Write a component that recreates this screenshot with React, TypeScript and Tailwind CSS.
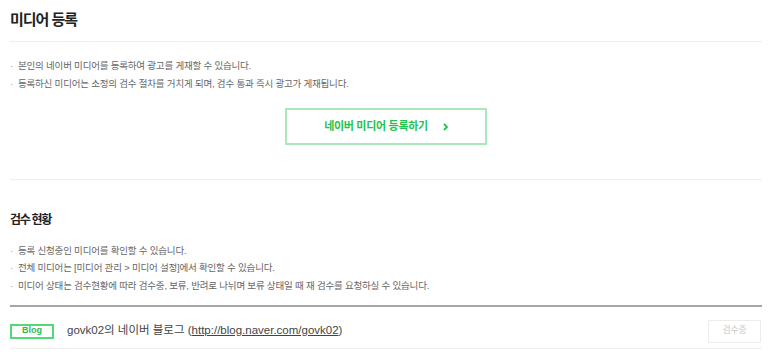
import React from 'react'

const intro = [
  '본인의 네이버 미디어를 등록하여 광고를 게재할 수 있습니다.',
  '등록하신 미디어는 소정의 검수 절차를 거치게 되며, 검수 통과 즉시 광고가 게재됩니다.'
]

const status = [
  '등록 신청중인 미디어를 확인할 수 있습니다.',
  '전체 미디어는 [미디어 관리 > 미디어 설정]에서 확인할 수 있습니다.',
  '미디어 상태는 검수현황에 따라 검수중, 보류, 반려로 나뉘며 보류 상태일 때 재 검수를 요청하실 수 있습니다.'
]

function Bullets({ items }: { items: string[] }): React.JSX.Element {
  return (
    <ul className="text-[9.5px] tracking-[-0.2px] text-[#666]">
      {items.map((t) => (
        <li key={t} className="flex h-[17.5px] items-center">
          <span className="w-[8px] shrink-0 text-[#999]">·</span>
          <span>{t}</span>
        </li>
      ))}
    </ul>
  )
}

export default function App(): React.JSX.Element {
  return (
    <div className="w-[773px] h-[357px] overflow-hidden bg-white pl-[10px] pr-[11px] font-['Liberation_Sans','Noto_Sans_CJK_KR',sans-serif]">
      {/* 상단 제목 */}
      <div className="h-[42px] flex items-center border-b border-[#eeeeee]">
        <h1 className="text-[15px] font-bold tracking-[-1px] text-[#222]">미디어 등록</h1>
      </div>

      <div className="pt-[15px]">
        <div className="[&_li]:h-[18px]">
          <Bullets items={intro} />
        </div>
        <div className="mt-[15px] flex justify-center">
          <button className="w-[202px] h-[37px] border-2 border-[#a9e9b9] flex items-center justify-center gap-[15px] text-[11px] font-bold tracking-[-0.3px] text-[#22c24e]">
            <span>네이버 미디어 등록하기</span>
            <svg width="5" height="8" viewBox="0 0 5 8" className="mt-px">
              <path d="M1 1l3 3-3 3" fill="none" stroke="#22c24e" strokeWidth="1.8" />
            </svg>
          </button>
        </div>
      </div>

      <div className="mt-[34px] border-t border-[#eeeeee] pt-[32px]">
        <h2 className="h-[16px] flex items-center text-[12px] font-bold tracking-[-1.3px] text-[#222]">검수 현황</h2>
        <div className="mt-[14px]">
          <Bullets items={status} />
        </div>
      </div>

      {/* 검수 목록 */}
      <div className="mt-[10px] border-t-2 border-[#a6a6a6]">
        <div className="h-[42px] pt-[8px] flex items-center border-b border-[#eeeeee]">
          <span className="w-[44px] h-[15px] border-2 border-[#52d878] flex items-center justify-center text-[9px] font-bold text-[#2dbb52]">
            Blog
          </span>
          <span className="ml-[13px] text-[11.5px] text-[#444] -mt-px">
            govk02의 네이버 블로그 (<span className="underline">http://blog.naver.com/govk02</span>)
          </span>
          <span className="ml-auto mr-px w-[53px] h-[23px] border border-[#ececec] flex items-center justify-center text-[9px] tracking-[-0.3px] text-[#c8c8c8]">
            검수중
          </span>
        </div>
      </div>
    </div>
  )
}
